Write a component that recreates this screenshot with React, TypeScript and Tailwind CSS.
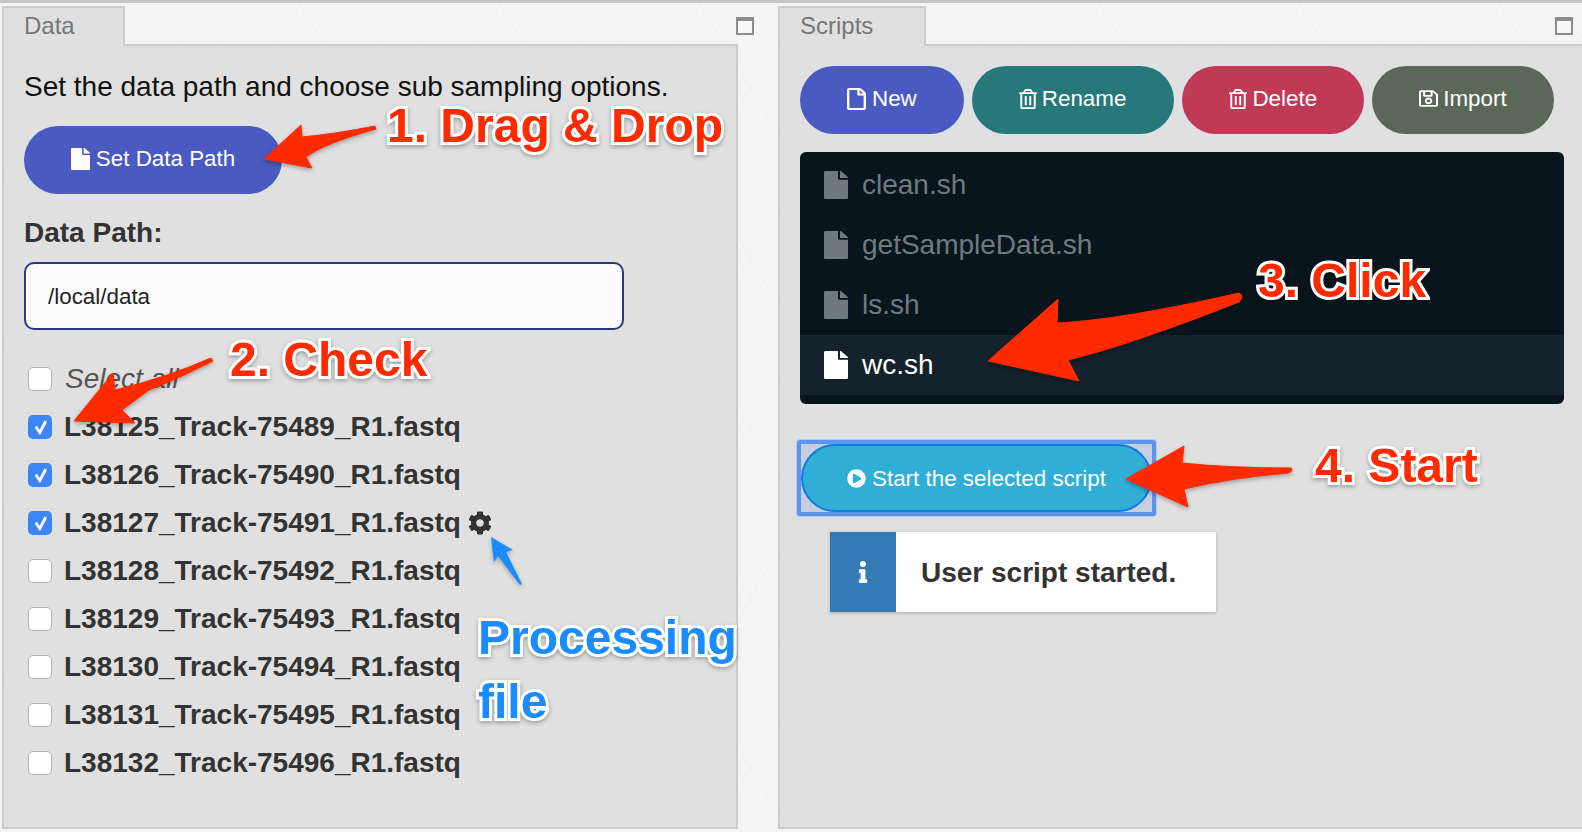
import type { ReactNode } from "react";
import { FaCog, FaFile, FaInfo, FaPlayCircle, FaRegFile, FaRegSave, FaRegTrashAlt } from "react-icons/fa";

const files = [
  { name: "L38125_Track-75489_R1.fastq", checked: true },
  { name: "L38126_Track-75490_R1.fastq", checked: true },
  { name: "L38127_Track-75491_R1.fastq", checked: true, busy: true },
  { name: "L38128_Track-75492_R1.fastq" },
  { name: "L38129_Track-75493_R1.fastq" },
  { name: "L38130_Track-75494_R1.fastq" },
  { name: "L38131_Track-75495_R1.fastq" },
  { name: "L38132_Track-75496_R1.fastq" },
];

const scripts = ["clean.sh", "getSampleData.sh", "ls.sh", "wc.sh"];

const pill = "flex h-[68px] items-center rounded-[34px] text-[22.4px] text-white";
const redNote =
  "absolute whitespace-nowrap text-[48px] font-bold leading-none text-[#ff2a00] [-webkit-text-stroke:6px_white] [paint-order:stroke_fill] drop-shadow-[0_2px_2px_rgba(0,0,0,0.3)]";
const blueNote =
  "absolute whitespace-nowrap text-[48px] font-bold leading-none text-[#1a8cff] [-webkit-text-stroke:6px_white] [paint-order:stroke_fill] drop-shadow-[0_2px_2px_rgba(0,0,0,0.3)]";

const Checkbox = ({ checked }: { checked?: boolean }) =>
  checked ? (
    <span className="flex h-6 w-6 shrink-0 items-center justify-center rounded-[5px] bg-[#3b86f7]">
      <svg width="24" height="24" viewBox="0 0 24 24" fill="none" stroke="white" strokeWidth="2.8">
        <path d="M7.7 11.5 L11.8 17.5 L17.8 6" />
      </svg>
    </span>
  ) : (
    <span className="h-6 w-6 shrink-0 rounded-[5px] border border-[#b5b5b5] bg-white" />
  );

const MaxIcon = ({ className }: { className: string }) => (
  <span className={`absolute top-[14px] h-[18px] w-[18px] border-2 border-t-[4px] border-[#8b8b8b] bg-[#f7f7f7] ${className}`} />
);

const Panel = ({ title, tabWidth, className, children }: { title: string; tabWidth: string; className: string; children: ReactNode }) => (
  <section className={`flex h-full flex-col ${className}`}>
    <div className="flex h-[40px] shrink-0">
      <div className={`-mb-[2px] h-[41px] border-2 border-b-0 border-[#cccccc] bg-[#e0e0e0] pl-[20px] text-[24px] leading-[35px] text-[#777777] ${tabWidth}`}>
        {title}
      </div>
      <div className="flex-1 border-b-2 border-[#cccccc]" />
    </div>
    <div className="min-h-0 flex-1 border-x-2 border-b-2 border-[#cccccc] bg-[#e0e0e0] pl-[20px]">{children}</div>
  </section>
);

export default function App() {
  return (
    <div className="relative h-[832px] w-[1582px] overflow-hidden border-t-[3px] border-[#c6c6c6] bg-[#f5f5f5] bg-[linear-gradient(59deg,transparent_49.6%,#eeeeee_50%,transparent_50.4%),linear-gradient(121deg,transparent_49.6%,#eeeeee_50%,transparent_50.4%)] bg-[length:100px_170px] pt-[3px] font-['Liberation_Sans',Arial,sans-serif]">
      <div className="flex h-[823px] pl-[2px]">
        <Panel title="Data" tabWidth="w-[123px]" className="w-[736px] shrink-0">
          <p className="mt-[22px] text-[28px] leading-[38px] text-[#111111]">Set the data path and choose sub sampling options.</p>
          <button className={`${pill} mt-[20px] w-[258px] justify-center gap-[6px] bg-[#4a5ac0] pb-[2px]`}>
            <FaFile className="h-[22px] w-[19px]" preserveAspectRatio="none" />
            Set Data Path
          </button>
          <div className="mt-[20px] text-[28px] font-bold leading-[38px] text-[#333333]">Data Path:</div>
          <div className="mt-[10px] flex h-[68px] w-[600px] items-center rounded-[10px] border-2 border-[#2c3a7c] bg-[#fcfcfc] pl-[22px] pt-[2px] text-[22.4px] text-[#222222]">
            /local/data
          </div>
          <div className="mt-[25px]">
            <label className="flex h-[48px] items-center gap-[13px] pl-[4px] text-[28px] italic text-[#555555]">
              <Checkbox />
              Select all
            </label>
            {files.map((f) => (
              <label key={f.name} className="flex h-[48px] items-center gap-[12px] pl-[4px] text-[28px] font-bold text-[#333333]">
                <Checkbox checked={f.checked} />
                {f.name}
                {f.busy && <FaCog className="-ml-[5px] h-6 w-6 text-[#333333]" />}
              </label>
            ))}
          </div>
        </Panel>
        <Panel title="Scripts" tabWidth="w-[148px]" className="ml-[40px] w-[806px] shrink-0">
          <div className="mt-[20px] flex gap-[8px]">
            <button className={`${pill} gap-[6px] bg-[#4a5ac0] px-[47px] pb-[3px]`}>
              <FaRegFile className="h-[22px] w-[19px]" preserveAspectRatio="none" />
              New
            </button>
            <button className={`${pill} gap-[5px] bg-[#27787a] pb-[3px] pl-[47px] pr-[48px]`}>
              <FaRegTrashAlt className="h-[20px] w-[18px]" preserveAspectRatio="none" />
              Rename
            </button>
            <button className={`${pill} gap-[5px] bg-[#c03a56] pb-[3px] pl-[47px] pr-[47px]`}>
              <FaRegTrashAlt className="h-[20px] w-[18px]" preserveAspectRatio="none" />
              Delete
            </button>
            <button className={`${pill} gap-[5px] bg-[#5a6858] px-[47px] pb-[3px]`}>
              <FaRegSave className="h-[19px] w-[19px]" preserveAspectRatio="none" />
              Import
            </button>
          </div>
          <ul className="mt-[18px] w-[764px] rounded-[6px] bg-[#09151d] pb-[9px] pt-[3px]">
            {scripts.map((s) => (
              <li
                key={s}
                className={`flex h-[60px] items-center gap-[14px] pl-[24px] text-[28px] ${s === "wc.sh" ? "bg-[#14222b] text-white" : "text-[#6f7a80]"}`}
              >
                <FaFile className="h-[28px] w-[24px]" preserveAspectRatio="none" />
                {s}
              </li>
            ))}
          </ul>
          <div className="-ml-[3px] mt-[36px] w-fit rounded-[3px] border-[4px] border-[#5c95ee] bg-[#c5cfe0] shadow-[0_0_0_1px_#b4cbee]">
            <button className={`${pill} gap-[6px] border-2 border-[#1478e0] bg-[#30aed6] pl-[44px] pr-[44px] pt-[1px]`}>
              <FaPlayCircle className="h-[19px] w-[19px]" />
              Start the selected script
            </button>
          </div>
          <div className="ml-[30px] mt-[16px] flex h-[80px] w-fit bg-white shadow-[0_1px_3px_rgba(0,0,0,0.25)]">
            <span className="flex w-[66px] items-center justify-center bg-[#337ab7] text-white">
              <FaInfo className="h-[22px] w-[22px]" />
            </span>
            <span className="flex items-center pl-[25px] pr-[40px] pt-[2px] text-[28px] font-bold text-[#333333]">User script started.</span>
          </div>
        </Panel>
      </div>

      <MaxIcon className="left-[736px]" />
      <MaxIcon className="left-[1555px]" />

      {/* screenshot annotations drawn on top of the app */}
      <svg className="absolute left-0 top-[-3px] drop-shadow-[0_2px_2px_rgba(0,0,0,0.3)]" width="1582" height="832" viewBox="0 0 1582 832">
        <g fill="#ff2a00" stroke="#ff2a00" strokeLinejoin="round">
          <path d="M264 159 L301 125 L302 137 Q335 134 375 126 L376 129 Q325 143 306 157 L312 168 Z" />
          <path d="M74 421 L113 373 L115 390 Q165 378 211 358 L213 361 Q175 380 149 390 L122 410 L135 423 Z" />
          <path d="M988 361 L1058 299 L1057 323 Q1120 320 1239 293 Q1245 296 1239 302 Q1130 345 1068 360 L1079 381 Z" />
          <path d="M1126 479 L1184 446 L1182 463 Q1230 468 1291 468 Q1294 471 1288 473 Q1230 478 1184 489 L1188 507 Z" />
        </g>
        <path d="M491 537 L513 550 L506 552 L522 584 L520 585 L498 556 L494 562 Z" fill="#1a8cff" />
      </svg>
      <span className={`${redNote} left-[387px] top-[99px]`}>1. Drag &amp; Drop</span>
      <span className={`${redNote} left-[230px] top-[333px]`}>2. Check</span>
      <span className={`${redNote} left-[1258px] top-[254px]`}>3. Click</span>
      <span className={`${redNote} left-[1315px] top-[439px]`}>4. Start</span>
      <span className={`${blueNote} left-[478px] top-[611px]`}>Processing</span>
      <span className={`${blueNote} left-[478px] top-[675px]`}>file</span>
    </div>
  );
}
